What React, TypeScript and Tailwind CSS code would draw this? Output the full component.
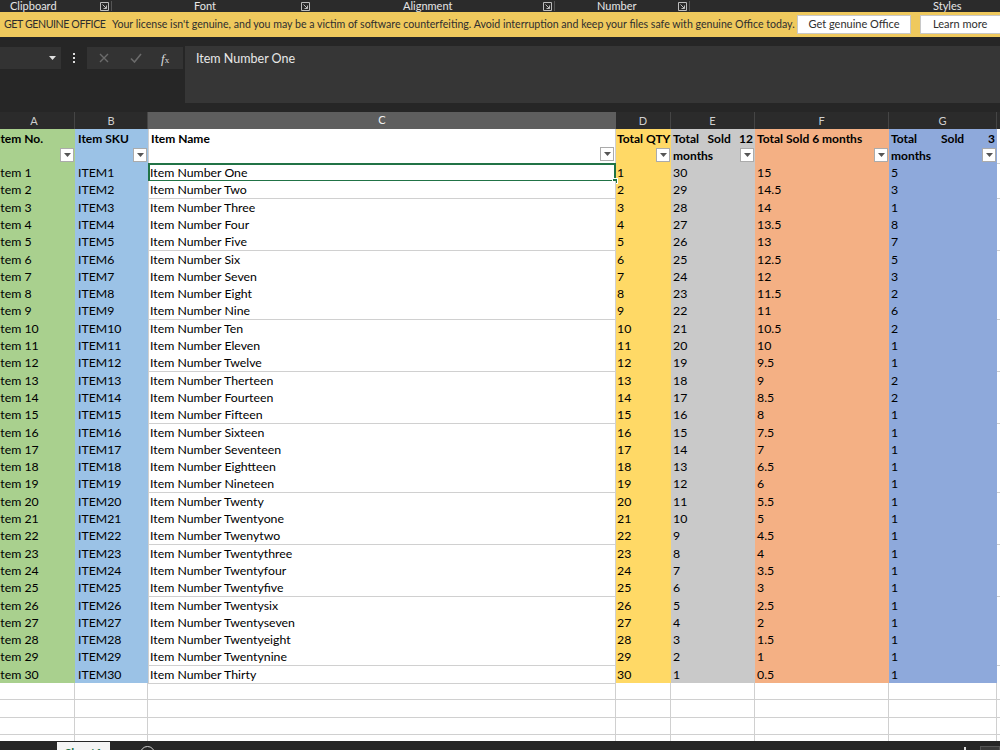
import React from "react";

const NAMES = [
  "One","Two","Three","Four","Five","Six","Seven","Eight","Nine","Ten",
  "Eleven","Twelve","Therteen","Fourteen","Fifteen","Sixteen","Seventeen","Eightteen","Nineteen","Twenty",
  "Twentyone","Twenytwo","Twentythree","Twentyfour","Twentyfive","Twentysix","Twentyseven","Twentyeight","Twentynine","Thirty",
];
const G3 = [5,3,1,8,7,5,3,2,6,2,1,1,2,2,1,1,1,1,1,1,1,1,1,1,1,1,1,1,1,1];

const GRID = "grid grid-cols-[81px_73px_468px_55px_84px_134px_108px_60px]";
const CELLFONT = { fontFamily: "Lato, 'Open Sans', sans-serif" };

function rowH(i: number) {
  const h = Math.round(17.3 * (i + 1)) - Math.round(17.3 * i);
  return h === 18 ? "h-[18px]" : "h-[17px]";
}

function Launcher() {
  return (
    <svg width="9" height="9" viewBox="0 0 9 9" className="shrink-0">
      <path d="M0.5 8.5V0.5H8.5V8.5Z" fill="none" stroke="#bdbdbd" strokeWidth="1" />
      <path d="M2.5 2.5L6.5 6.5M6.5 3.5V6.5H3.5" fill="none" stroke="#bdbdbd" strokeWidth="1" />
    </svg>
  );
}

function Filter() {
  return (
    <div className="absolute right-[1px] bottom-[2px] w-[14px] h-[14px] bg-white border border-[#ababab] flex items-center justify-center">
      <svg width="7" height="4" viewBox="0 0 7 4">
        <path d="M0 0H7L3.5 4Z" fill="#555" />
      </svg>
    </div>
  );
}

function Header() {
  return (
    <div className={`${GRID} h-[35px] text-[12px] font-bold text-black leading-[17px]`} style={CELLFONT}>
      <div className="relative bg-[#a9d08e] pl-[3px] pt-[1px]">Item No.<Filter /></div>
      <div className="relative bg-[#9bc2e6] pl-[3px] pt-[1px]">Item SKU<Filter /></div>
      <div className="relative bg-white border-l border-[#d0d0d0] border-r border-b pl-[2px] pt-[1px]">Item Name<Filter /></div>
      <div className="relative bg-[#ffd966] pl-[1px] pt-[1px] whitespace-nowrap">Total QTY<Filter /></div>
      <div className="relative bg-[#c9c9c9] px-[2px] pt-[1px]">
        <div className="flex justify-between"><span>Total</span><span>Sold</span><span>12</span></div>
        <div>months</div>
        <Filter />
      </div>
      <div className="relative bg-[#f4b084] pl-[2px] pt-[1px] whitespace-nowrap">Total Sold 6 months<Filter /></div>
      <div className="relative bg-[#8ea9db] px-[2px] pt-[1px]">
        <div className="flex justify-between"><span>Total</span><span>Sold</span><span>3</span></div>
        <div>months</div>
        <Filter />
      </div>
      <div className="bg-white border-b border-[#d0d0d0]"></div>
    </div>
  );
}

function Row({ i }: { i: number }) {
  const n = i + 1;
  const e = 31 - n;
  const f = e / 2;
  return (
    <div className={`${GRID} ${rowH(i)} text-[12.3px] text-black leading-[17px]`} style={CELLFONT}>
      <div className="bg-[#a9d08e] pl-[3px] whitespace-nowrap">Item {n}</div>
      <div className="bg-[#9bc2e6] pl-[3px]">ITEM{n}</div>
      <div className="relative bg-white border-l border-r border-b border-[#d0d0d0] pl-[1px] whitespace-nowrap">
        Item Number {NAMES[i]}
        {i === 0 && (
          <div className="absolute left-[-1px] right-[-1px] top-[-1px] bottom-[-1px] border-2 border-[#217346]">
            <div className="absolute right-[-4px] bottom-[-4px] w-[6px] h-[6px] bg-[#217346] border border-white"></div>
          </div>
        )}
      </div>
      <div className="bg-[#ffd966] pl-[1px]">{n}</div>
      <div className="bg-[#c9c9c9] pl-[2px]">{e}</div>
      <div className="bg-[#f4b084] pl-[2px]">{f}</div>
      <div className="bg-[#8ea9db] pl-[2px]">{G3[i]}</div>
      <div className="bg-white border-b border-[#d0d0d0]"></div>
    </div>
  );
}

function EmptyRow({ i }: { i: number }) {
  return (
    <div className={`${GRID} ${rowH(i)}`}>
      <div className="bg-white border-r border-b border-[#d0d0d0]"></div>
      <div className="bg-white border-r border-b border-[#d0d0d0]"></div>
      <div className="bg-white border-r border-b border-[#d0d0d0]"></div>
      <div className="bg-white border-r border-b border-[#d0d0d0]"></div>
      <div className="bg-white border-r border-b border-[#d0d0d0]"></div>
      <div className="bg-white border-r border-b border-[#d0d0d0]"></div>
      <div className="bg-white border-r border-b border-[#d0d0d0]"></div>
      <div className="bg-white border-b border-[#d0d0d0]"></div>
    </div>
  );
}

export default function App() {
  const ui = { fontFamily: "Lato, 'Noto Sans', sans-serif" };
  return (
    <div className="w-[1000px] h-[750px] overflow-hidden bg-[#262626] flex flex-col" style={ui}>
      {/* ribbon group labels */}
      <div className="h-[12px] shrink-0 bg-[#2b2b2b] flex items-center text-[11px] leading-[12px] text-[#e6e6e6] overflow-hidden whitespace-nowrap">
        <div className="w-[112px] shrink-0 flex items-center">
          <span className="pl-[10px] w-[100px] shrink-0">Clipboard</span>
          <Launcher />
          <span className="ml-[2px] w-px h-[10px] bg-[#555]"></span>
        </div>
        <div className="w-[200px] shrink-0 flex items-center">
          <span className="w-[189px] shrink-0 pl-[82px]">Font</span>
          <Launcher />
          <span className="ml-[2px] w-px h-[10px] bg-[#555]"></span>
        </div>
        <div className="w-[243px] shrink-0 flex items-center">
          <span className="w-[231px] shrink-0 pl-[91px]">Alignment</span>
          <Launcher />
          <span className="ml-[2px] w-px h-[10px] bg-[#555]"></span>
        </div>
        <div className="w-[135px] shrink-0 flex items-center">
          <span className="w-[123px] shrink-0 pl-[42px]">Number</span>
          <Launcher />
          <span className="ml-[2px] w-px h-[10px] bg-[#555]"></span>
        </div>
        <div className="flex-1 flex items-center">
          <span className="pl-[243px]">Styles</span>
        </div>
      </div>
      {/* banner */}
      <div className="h-[25px] shrink-0 bg-[#efc95d] flex items-center text-[10.6px] text-[#2e2e2e] whitespace-nowrap overflow-hidden">
        <span className="pl-[4px] w-[112px] shrink-0 tracking-[-0.4px]">GET GENUINE OFFICE</span>
        <span className="w-[685px] shrink-0">Your license isn't genuine, and you may be a victim of software counterfeiting. Avoid interruption and keep your files safe with genuine Office today.</span>
        <div className="shrink-0 h-[19px] w-[114px] bg-white border border-[#c8c8c8] flex items-center justify-center text-[11px]">Get genuine Office</div>
        <div className="shrink-0 ml-[9px] h-[19px] w-[90px] bg-white border border-[#c8c8c8] flex items-center pl-[12px] text-[11px]">Learn more</div>
      </div>
      <div className="h-[9px] shrink-0 bg-[#262626]"></div>
      {/* formula bar */}
      <div className="h-[58px] shrink-0 flex items-start">
        <div className="mt-[1px] h-[22px] w-[61px] bg-[#333] flex items-center justify-end pr-[5px]">
          <svg width="7" height="4" viewBox="0 0 7 4"><path d="M0 0H7L3.5 4Z" fill="#e0e0e0" /></svg>
        </div>
        <div className="w-[26px] h-[24px] flex flex-col items-center justify-center gap-[2px]">
          <span className="w-[2px] h-[2px] bg-[#ddd]"></span>
          <span className="w-[2px] h-[2px] bg-[#ddd]"></span>
          <span className="w-[2px] h-[2px] bg-[#ddd]"></span>
        </div>
        <div className="mt-[1px] h-[22px] w-[96px] bg-[#333] flex items-center">
          <svg width="10" height="10" viewBox="0 0 10 10" className="ml-[12px]">
            <path d="M1 1L9 9M9 1L1 9" stroke="#6b6b6b" strokeWidth="1.4" />
          </svg>
          <svg width="12" height="10" viewBox="0 0 12 10" className="ml-[21px]">
            <path d="M1 5.5L4.5 9L11 1" fill="none" stroke="#6b6b6b" strokeWidth="1.6" />
          </svg>
          <span className="ml-[19px] text-[#dcdcdc] italic text-[13px] leading-none" style={{ fontFamily: "'Liberation Serif', serif" }}>
            f<span className="text-[9px] not-italic">x</span>
          </span>
        </div>
        <div className="ml-[2px] h-[57px] flex-1 bg-[#363636] text-[#e8e8e8] text-[12.5px] pl-[11px] pt-[4px]">Item Number One</div>
      </div>
      <div className="h-[8px] shrink-0 bg-[#262626]"></div>
      {/* sheet */}
      <div className="h-[629px] shrink-0 overflow-hidden">
        <div className="ml-[-6px]">
          <div className={`${GRID} h-[17px] bg-[#2b2b2b] text-[11px] text-[#cfcfcf]`}>
            {["A", "B", "C", "D", "E", "F", "G", ""].map((c) => (
              <div
                key={c}
                className={
                  c === "C"
                    ? "bg-[#5e5e5e] border-b border-[#217346] flex items-center justify-center text-[#f0f0f0]"
                    : "border-r border-[#454545] flex items-center justify-center"
                }
              >
                {c}
              </div>
            ))}
          </div>
          <div className="h-[612px] overflow-hidden bg-white">
            <Header />
            {NAMES.map((_, i) => (
              <Row key={i} i={i} />
            ))}
            <EmptyRow i={30} />
            <EmptyRow i={31} />
            <EmptyRow i={32} />
            <EmptyRow i={33} />
          </div>
        </div>
      </div>
      {/* sheet tabs */}
      <div className="h-[30px] shrink-0 bg-[#262626] flex items-start">
        <div className="w-[57px]"></div>
        <div className="mt-[1px] w-[53px] h-[24px] bg-[#f4f4f4] text-[#217346] text-[12px] font-bold underline flex justify-center pt-[2px]">Sheet1</div>
        <div className="ml-[30px] mt-[5px] w-[15px] h-[15px] rounded-full border border-[#cfcfcf]"></div>
        <div className="flex-1"></div>
        <div className="mt-[6px] w-[2px] h-[6px] bg-[#ddd]"></div>
        <div className="ml-[14px] mt-[5px] w-[20px] h-[20px] bg-[#3a3a3a] border border-[#555]"></div>
      </div>
    </div>
  );
}
